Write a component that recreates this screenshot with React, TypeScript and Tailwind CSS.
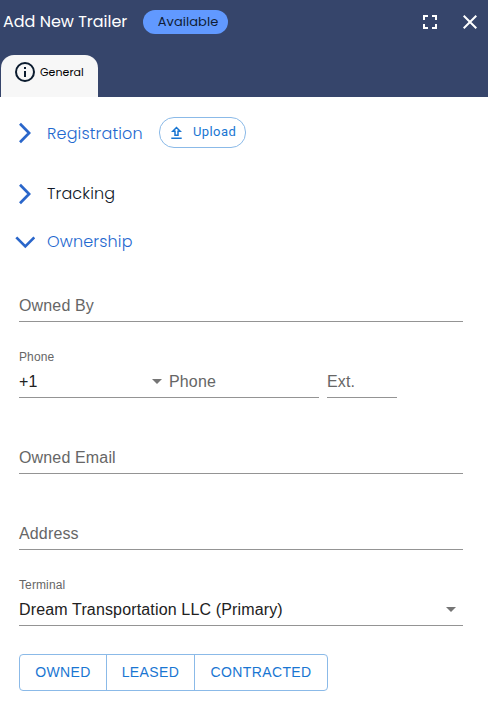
import React from "react";

const heading = "font-['Poppins','Inter',sans-serif]";

function Chevron({ open = false }: { open?: boolean }) {
  return (
    <svg width="20" height="22" viewBox="0 0 20 22" fill="none" stroke="#2a66ca" strokeWidth="2.7" className="shrink-0">
      {open ? <path d="M1.3 6.4L10.3 15.4L19.3 6.4" /> : <path d="M5 1.8L14.1 11L5 20.2" />}
    </svg>
  );
}

function Arrow() {
  return (
    <svg width="10" height="5" viewBox="0 0 10 5" fill="#757575" className="shrink-0">
      <path d="M0 0H10L5 5Z" />
    </svg>
  );
}

function Field({ label, width }: { label: string; width: string }) {
  return (
    <div className={`flex h-8 items-center border-b border-[#949494] text-base leading-[23px] tracking-[0.15px] text-[#666666] ${width}`}>
      {label}
    </div>
  );
}

export default function App() {
  return (
    <div className="flex h-[704px] w-[488px] flex-col overflow-hidden bg-white font-['Liberation_Sans',Arial,sans-serif]">
      <header className="flex h-[97px] flex-col justify-between bg-[#36456b]">
        <div className="flex h-11 items-center pl-[3px] pr-[11px]">
          <h1 className={`w-[140px] whitespace-nowrap text-base tracking-[-0.01px] text-white ${heading}`}>Add New Trailer</h1>
          <span className={`flex h-6 w-[85px] items-center justify-center whitespace-nowrap rounded-full bg-[#6199ff] pl-[5px] text-[13px] tracking-[0.05px] text-[#101d35] ${heading}`}>
            Available
          </span>
          <div className="ml-auto flex items-center gap-[26px]">
            <svg width="14" height="14" viewBox="0 0 14 14" fill="none" stroke="#fff" strokeWidth="2">
              <path d="M5 1H1V5M9 1H13V5M1 9V13H5M13 9V13H9" />
            </svg>
            <svg width="14" height="14" viewBox="0 0 14 14" fill="none" stroke="#fff" strokeWidth="2">
              <path d="M.7.7L13.3 13.3M13.3.7L.7 13.3" />
            </svg>
          </div>
        </div>
        <div className="ml-px flex h-[42px] w-[97px] items-start gap-[5px] rounded-t-[13px] bg-[#f7f7f7] pl-[14px] pt-[7px]">
          <svg width="20" height="20" viewBox="0 0 20 20" className="shrink-0" fill="#0b1b2e">
            <circle cx="10" cy="10" r="9" fill="none" stroke="#0b1b2e" strokeWidth="2" />
            <path d="M9 5H11V7H9ZM9 9H11V15H9Z" />
          </svg>
          <span className={`text-[11px] leading-5 tracking-[0.05px] text-black ${heading}`}>General</span>
        </div>
      </header>

      <main className="flex flex-col pl-[19px] pr-[25px] pt-5">
        <section className={`-ml-1 flex flex-col text-base font-light ${heading}`}>
          <div className="flex h-[31px] items-center">
            <Chevron />
            <span className="ml-3 w-[112px] whitespace-nowrap pt-0.5 tracking-[0.15px] text-[#1f69cf]">Registration</span>
            <button className="flex h-[31px] w-[87px] items-center rounded-[15px] border border-[#8bbae8] pl-[11px] font-['Roboto',sans-serif] text-[13px] tracking-[0.4px] text-[#1976d2]">
              <svg width="11" height="14" viewBox="0 0 11 14" fill="none" stroke="#1976d2" strokeWidth="1.5">
                <path d="M5.5 1.5L1.8 5.2H4V9.2H7V5.2H9.2ZM.3 12.3H10.7" />
              </svg>
              <span className="-mt-px ml-[11px] font-normal">Upload</span>
            </button>
          </div>
          <div className="mt-[34px] flex h-6 items-center">
            <Chevron />
            <span className="ml-3 tracking-[0.15px] text-[#101828]">Tracking</span>
          </div>
          <div className="mt-6 flex h-6 items-center">
            <Chevron open />
            <span className="ml-3 tracking-[0.15px] text-[#1f69cf]">Ownership</span>
          </div>
        </section>

        <section className="mt-9 flex flex-col">
          <Field label="Owned By" width="w-full" />
          <div className="mt-7 h-4 text-xs leading-[15px] tracking-[0.11px] text-[#666666]">Phone</div>
          <div className="flex gap-2">
            <div className="flex h-8 w-[300px] items-center border-b border-[#949494] text-base leading-[23px] tracking-[0.15px]">
              <span className="text-[#212121]">+1</span>
              <div className="ml-auto flex w-[167px] items-center gap-[7px]">
                <Arrow />
                <span className="text-[#666666]">Phone</span>
              </div>
            </div>
            <Field label="Ext." width="w-[70px]" />
          </div>
          <div className="mt-11">
            <Field label="Owned Email" width="w-full" />
          </div>
          <div className="mt-11">
            <Field label="Address" width="w-full" />
          </div>
          <div className="mt-7 h-4 text-xs leading-[15px] tracking-[0.11px] text-[#666666]">Terminal</div>
          <div className="flex h-8 items-center justify-between border-b border-[#949494] pr-[7px] text-base leading-[23px] tracking-[0.15px] text-[#212121]">
            <span>Dream Transportation LLC (Primary)</span>
            <Arrow />
          </div>
        </section>

        <div className="mt-7 flex h-[37px] w-[309px] rounded border border-[#8bbae8] text-sm tracking-[0.4px] text-[#1976d2]">
          <button className="w-[87px] border-r border-[#8bbae8] pb-0.5">OWNED</button>
          <button className="w-[88px] border-r border-[#8bbae8] pb-0.5">LEASED</button>
          <button className="flex-1 pb-0.5">CONTRACTED</button>
        </div>
      </main>
    </div>
  );
}
